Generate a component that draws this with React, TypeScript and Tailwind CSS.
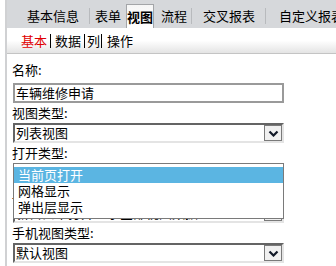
import React from "react";

const font = { fontFamily: '"Noto Sans CJK SC", "Liberation Sans", sans-serif' };

function Chevron() {
  return (
    <svg width="11" height="7" viewBox="0 0 11 7">
      <polyline points="1.5,1.5 5.5,5.5 9.5,1.5" fill="none" stroke="#111827" strokeWidth="2.2" />
    </svg>
  );
}

function Select({ value }: { value: string }) {
  return (
    <div className="flex h-[20px] w-[271px] items-center border-t-2 border-l-2 border-b-2 border-r-2 border-t-[#646464] border-l-[#646464] border-b-[#e4e4e4] border-r-[#e4e4e4] bg-white">
      <div className="flex-1 pl-[1px] text-[13px] leading-[16px] text-black whitespace-nowrap overflow-hidden">{value}</div>
      <div className="flex h-[16px] w-[18px] items-center justify-center border border-[#7a7a7a] bg-[#f0f0f0]">
        <Chevron />
      </div>
    </div>
  );
}

function Label({ text }: { text: string }) {
  return <div className="h-[20px] text-[13px] leading-[20px] text-black -ml-[1px]">{text}</div>;
}

export default function App() {
  return (
    <div className="relative h-[266px] w-[336px] overflow-hidden bg-white pl-[5px]" style={font}>
      <div className="h-full border-l-2 border-[#d0d1d3]">
        {/* main tabs */}
        <div className="flex h-[28px] items-end bg-[#d6d8db] text-[13px] text-black whitespace-nowrap">
          <div className="flex h-[24px] items-center pl-[20px] pr-[10px]">基本信息</div>
          <div className="h-[16px] w-[2px] mb-[4px] border-l border-[#b8babd] bg-[#eceef0]" />
          <div className="flex h-[24px] items-center pl-[5px] pr-[5px]">表单</div>
          <div className="flex h-[24px] w-[38px] items-center justify-center border border-b-0 border-[#a3a5a8] bg-gradient-to-b from-[#f6f6f6] to-white font-bold">视图</div>
          <div className="flex h-[24px] items-center pl-[7px] pr-[4px]">流程</div>
          <div className="h-[16px] w-[2px] mb-[4px] border-l border-[#b8babd] bg-[#eceef0]" />
          <div className="flex h-[24px] items-center pl-[11px] pr-[10px]">交叉报表</div>
          <div className="h-[16px] w-[2px] mb-[4px] border-l border-[#b8babd] bg-[#eceef0]" />
          <div className="flex h-[24px] items-center pl-[13px]">自定义报表</div>
        </div>
        {/* sub tabs */}
        <div className="flex h-[26px] items-center border-b border-[#c4c4c4] bg-gradient-to-b from-white via-white to-[#e4e4e4] pl-[14px] text-[13px] text-black whitespace-nowrap">
          <span className="text-[#e00000]">基本</span>
          <span className="ml-[3px] mr-[4px] h-[14px] w-[1px] bg-black" />
          <span>数据</span>
          <span className="ml-[3px] mr-[2px] h-[14px] w-[1px] bg-black" />
          <span>列</span>
          <span className="ml-[1px] mr-[5px] h-[14px] w-[1px] bg-black" />
          <span>操作</span>
        </div>
        {/* form */}
        <div className="pl-[6px] pt-[6px]">
          <Label text="名称:" />
          <div className="mt-[3px] flex h-[20px] w-[271px] items-center border-2 border-[#9a9a9a] pl-[1px] text-[13px] leading-[16px] text-black">
            车辆维修申请
          </div>
          <Label text="视图类型:" />
          <Select value="列表视图" />
          <Label text="打开类型:" />
          <Select value="当前页打开" />
          <Label text="显示方式:" />
          <Select value="新窗口中打开显示全部视图数据" />
          <Label text="手机视图类型:" />
          <Select value="默认视图" />
        </div>
      </div>
      {/* open dropdown list */}
      <div className="absolute left-[13px] top-[163px] h-[56px] w-[271px] border border-[#7a7a7a] bg-white pt-[3px] text-[13px] leading-[16px] text-black">
        <div className="h-[16px] bg-[#5bb5e2] pl-[4px] text-white">当前页打开</div>
        <div className="h-[16px] pl-[4px]">网格显示</div>
        <div className="h-[16px] pl-[4px]">弹出层显示</div>
      </div>
    </div>
  );
}
